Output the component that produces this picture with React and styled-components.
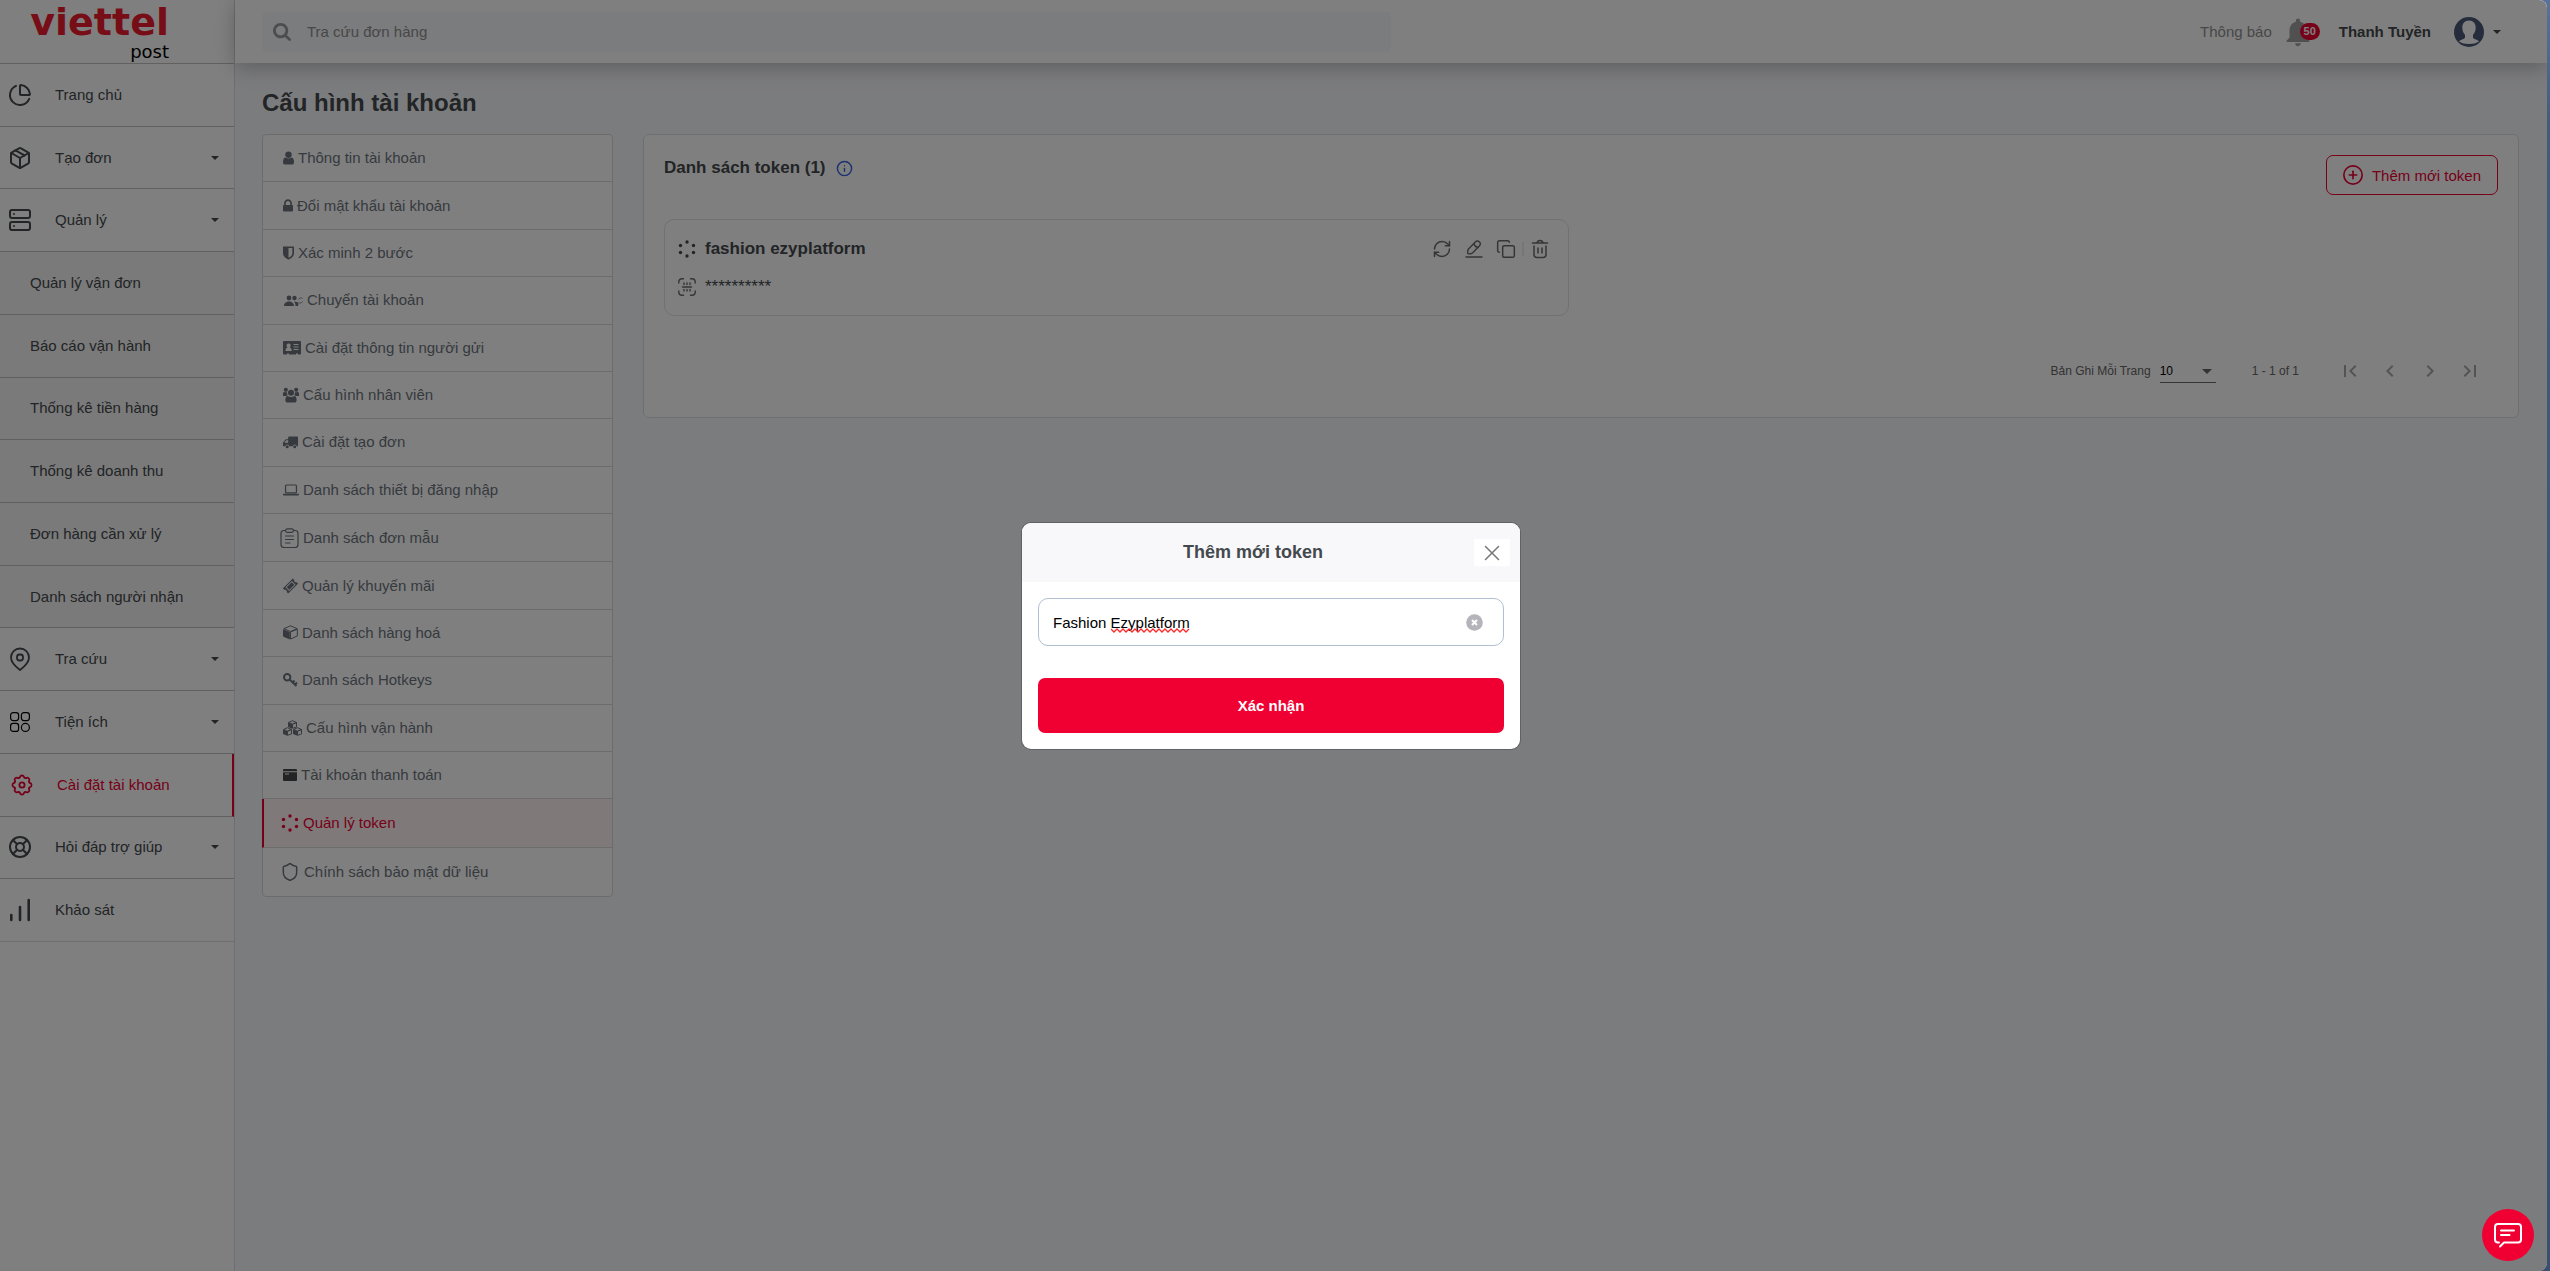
import React, { useState } from 'react';
import styled, { createGlobalStyle, css } from 'styled-components';
import {
  ChartPie,
  Package,
  Server,
  LifeBuoy,
  RefreshCw,
  Copy,
  Shield,
  CirclePlus,
  Info,
  X,
} from 'lucide-react';
import { MdFirstPage, MdChevronLeft, MdChevronRight, MdLastPage, MdNotifications } from 'react-icons/md';

const GlobalStyle = createGlobalStyle`
  * {
    box-sizing: border-box;
  }
  body {
    margin: 0;
    font-family: 'Liberation Sans', Arial, sans-serif;
    font-size: 15px;
    line-height: 22px;
    color: #44494d;
  }
  button, input, select {
    font-family: inherit;
    font-size: inherit;
  }
  svg {
    display: block;
    flex-shrink: 0;
  }
`;

const Frame = styled.div`
  display: grid;
  min-height: 100vh;
  padding-right: 3px;
  background: linear-gradient(#5a7299, #45597a 10%, #3a4e70);
`;

const Page = styled.div`
  position: relative;
  display: grid;
  grid-template-columns: 235px minmax(0, 1fr);
  border-radius: 0 8px 8px 0;
  overflow: hidden;
  background: #f7f8fc;
`;

/* sidebar */

const Sidebar = styled.aside`
  background: #ffffff;
  border-right: 1px solid #dcdcdc;
`;

const Logo = styled.a`
  display: flex;
  flex-direction: column;
  align-items: flex-end;
  height: 64px;
  padding-right: 65px;
  border-bottom: 1px solid #c0c0c0;
  font-family: 'DejaVu Sans', sans-serif;
  text-decoration: none;
`;

const LogoName = styled.span`
  font-size: 38px;
  font-weight: bold;
  line-height: 44px;
  color: #ee1c2e;
`;

const LogoSub = styled.span`
  font-size: 18px;
  line-height: 16px;
  color: #000000;
`;

const NavList = styled.nav`
  display: grid;
  grid-auto-rows: 1fr;
  min-height: 878px;
`;

const NavItem = styled.a`
  display: flex;
  align-items: center;
  gap: 23px;
  padding: 0 15px 0 8px;
  border-bottom: 1px solid #c0c0c0;
  color: #44494d;
  text-decoration: none;

  &:last-child {
    border-color: #dcdcdc;
  }

  ${(props) =>
    props.$sub &&
    css`
      padding-left: 30px;
      background: #f4f4f4;
    `}

  ${(props) =>
    props.$active &&
    css`
      padding-left: 10px;
      color: #ee0033;
      border-right: 2px solid #ee0033;
    `}
`;

const NavLabel = styled.span`
  flex: 1;
`;

const Caret = styled.span`
  border: 4px solid transparent;
  border-top-color: currentColor;
  border-bottom: 0;
`;

/* top bar */

const Content = styled.div`
  min-width: 0;
`;

const TopBar = styled.header`
  position: relative;
  display: flex;
  align-items: center;
  height: 63px;
  padding: 0 46px 0 27px;
  background: #ffffff;
  box-shadow: 0 4px 20px rgba(0, 0, 0, 0.25);
`;

const SearchBox = styled.label`
  display: flex;
  align-items: center;
  gap: 14px;
  width: calc(50% + 9px);
  height: 40px;
  padding: 0 11px;
  border-radius: 5px;
  background: #f7f8fc;
  color: #9a9a9a;
`;

const SearchInput = styled.input`
  flex: 1;
  border: 0;
  outline: 0;
  background: none;

  &::placeholder {
    color: #8f8f8f;
    opacity: 1;
  }
`;

const UserArea = styled.div`
  display: flex;
  align-items: center;
  margin-left: auto;
`;

const NoticeButton = styled.button`
  position: relative;
  display: flex;
  align-items: center;
  gap: 9px;
  padding: 0 5px 0 0;
  border: 0;
  background: none;
  color: #8f8f8f;
`;

const Badge = styled.span`
  position: absolute;
  right: 0;
  top: 8px;
  padding: 0 4px;
  border-radius: 9px;
  background: #ee0033;
  color: #ffffff;
  font-size: 11px;
  font-weight: bold;
  line-height: 17px;
`;

const UserButton = styled.button`
  display: flex;
  align-items: center;
  gap: 9px;
  margin-left: 19px;
  padding: 0;
  border: 0;
  background: none;
  color: #44494d;
  font-weight: bold;
`;

const UserName = styled.span`
  margin-right: 14px;
`;

/* main area */

const Main = styled.main`
  padding: 25px 28px 24px 27px;
`;

const Heading = styled.h1`
  margin: 0 0 16px;
  font-size: 24px;
  line-height: 30px;
`;

const Columns = styled.div`
  display: grid;
  grid-template-columns: 351px minmax(0, 1fr);
  gap: 30px;
  align-items: start;
`;

const ConfigMenu = styled.nav`
  display: flex;
  flex-direction: column;
  min-height: 763px;
  border: 1px solid #d9d9d9;
  border-radius: 4px;
  background: #ffffff;
`;

const ConfigItem = styled.a`
  display: flex;
  flex: 1 0 ${(props) => (props.$wide ? 48 : 47)}px;
  align-items: center;
  gap: 4px;
  padding-left: ${(props) => (props.$wide ? 17 : 20)}px;
  border-bottom: 1px solid #d9d9d9;
  color: #6c757d;
  text-decoration: none;

  &:last-child {
    border-bottom: 0;
  }

  ${(props) =>
    props.$active &&
    css`
      margin-left: -1px;
      border-left: 2px solid #ee0033;
      background: #fff3f5;
      color: #ee0033;
    `}
`;

const Panel = styled.section`
  padding: 20px 20px 26px;
  border: 1px solid #dcdfe3;
  border-radius: 6px;
  background: #ffffff;
`;

const PanelHeader = styled.div`
  display: flex;
  align-items: flex-start;
  justify-content: space-between;
  margin-bottom: 24px;
`;

const PanelTitle = styled.h2`
  display: flex;
  align-items: center;
  gap: 10px;
  margin: 0;
  font-size: 17px;
  line-height: 26px;

  svg {
    color: #2f62dd;
  }
`;

const AddButton = styled.button`
  display: flex;
  align-items: center;
  gap: 8px;
  height: 40px;
  padding: 0 16px 0 15px;
  border: 1px solid #ee0033;
  border-radius: 7px;
  background: #ffffff;
  color: #ee0033;
`;

const TokenGrid = styled.div`
  display: grid;
  grid-template-columns: 1fr 1fr;
  gap: 24px;
`;

const TokenCard = styled.article`
  display: flex;
  flex-direction: column;
  gap: 16px;
  padding: 18px 12px 17px 13px;
  border: 1px solid #dfe2ea;
  border-radius: 10px;
`;

const TokenRow = styled.div`
  display: flex;
  align-items: center;
  gap: 9px;
  font-size: 17px;
`;

const TokenName = styled.strong`
  flex: 1;
`;

const TokenActions = styled.div`
  display: flex;
  align-items: center;
`;

const IconButton = styled.button`
  display: flex;
  padding: 0 6px;
  border: 0;
  background: none;
  color: #6b6b6b;
`;

const Divider = styled.span`
  width: 2px;
  height: 14px;
  background: #ececf5;
`;

const Pagination = styled.div`
  display: flex;
  align-items: center;
  justify-content: flex-end;
  margin-top: 35px;
  padding-right: 8px;
  font-size: 12px;
  color: #666666;
`;

const PageSize = styled.label`
  position: relative;
  display: flex;
  align-items: center;
  gap: 9px;

  ${Caret} {
    position: absolute;
    right: 4px;
    border-width: 5px;
    border-bottom: 0;
    pointer-events: none;
  }
`;

const PageSizeSelect = styled.select`
  width: 56px;
  height: 24px;
  padding: 0;
  border: 0;
  border-bottom: 1px solid #6a6a6a;
  border-radius: 0;
  appearance: none;
  background: none;
  color: #000000;
`;

const PageRange = styled.span`
  margin: 0 31px 0 36px;
`;

const PageButton = styled.button`
  display: flex;
  align-items: center;
  justify-content: center;
  width: 40px;
  height: 40px;
  padding: 0;
  border: 0;
  background: none;
  color: #a8a8a8;
`;

/* modal */

const Backdrop = styled.div`
  position: absolute;
  inset: 0;
  display: flex;
  align-items: center;
  justify-content: center;
  padding: 1px 5px 0 0;
  background: rgba(0, 0, 0, 0.5);
`;

const Dialog = styled.form`
  width: 500px;
  border: 1px solid rgba(0, 0, 0, 0.2);
  border-radius: 10px;
  background: #ffffff;
  background-clip: padding-box;
  overflow: hidden;
`;

const DialogHeader = styled.div`
  display: flex;
  align-items: center;
  padding: 16px 10px;
  background: #f8f8fb;
`;

const DialogTitle = styled.h2`
  flex: 1;
  margin: 0;
  font-size: 18px;
  line-height: 27px;
  text-align: center;
`;

const CloseButton = styled.button`
  display: flex;
  align-items: center;
  justify-content: center;
  width: 36px;
  height: 27px;
  padding: 0;
  border: 0;
  background: #ffffff;
  color: #7a7a7a;
`;

const DialogBody = styled.div`
  display: flex;
  flex-direction: column;
  gap: 32px;
  padding: 16px;
`;

const Field = styled.div`
  position: relative;
  display: flex;
  align-items: center;
  height: 48px;
  padding: 0 20px 0 14px;
  border: 1px solid #b1bfd0;
  border-radius: 10px;
`;

const FieldInput = styled.input`
  flex: 1;
  padding: 0;
  border: 0;
  outline: 0;
  color: #000000;
`;

const Squiggle = styled.svg`
  position: absolute;
  left: 72px;
  top: 29px;
`;

const ClearButton = styled.button`
  padding: 0;
  border: 0;
  background: none;
`;

const SubmitButton = styled.button`
  height: 55px;
  border: 0;
  border-radius: 7px;
  background: #f00032;
  color: #ffffff;
  font-weight: bold;
`;

const ChatButton = styled.button`
  position: absolute;
  right: 13px;
  bottom: 10px;
  display: flex;
  align-items: center;
  justify-content: center;
  width: 52px;
  height: 52px;
  padding: 0;
  border: 0;
  border-radius: 50%;
  background: #f00032;
  color: #ffffff;
`;

/* icons */

const Glyph = ({ width, height = 16, box, children }) => (
  <svg width={width} height={height} viewBox={box || `0 0 ${width} ${height}`} fill="currentColor" aria-hidden="true">
    {children}
  </svg>
);

const Outline = ({ size = 24, children, ...rest }) => (
  <svg
    width={size}
    height={size}
    viewBox={`0 0 ${size} ${size}`}
    fill="none"
    stroke="currentColor"
    strokeLinecap="round"
    strokeLinejoin="round"
    aria-hidden="true"
    {...rest}
  >
    {children}
  </svg>
);

const UserIcon = () => (
  <Glyph width={11} height={14} box="256 128 1280 1536">
    <path d="M1536 1399q0 109-62.5 187t-150.5 78h-854q-88 0-150.5-78t-62.5-187q0-85 8.5-160.5t31.5-152 58.5-131 94-89 134.5-34.5q131 128 313 128t313-128q76 0 134.5 34.5t94 89 58.5 131 31.5 152 8.5 160.5zm-256-887q0 159-112.5 271.5t-271.5 112.5-271.5-112.5-112.5-271.5 112.5-271.5 271.5-112.5 271.5 112.5 112.5 271.5z" />
  </Glyph>
);

const LockIcon = () => (
  <Glyph width={10} height={14} box="320 128 1152 1536">
    <path d="M640 768h512v-192q0-106-75-181t-181-75-181 75-75 181v192zm832 96v576q0 40-28 68t-68 28h-960q-40 0-68-28t-28-68v-576q0-40 28-68t68-28h32v-192q0-184 132-316t316-132 316 132 132 316v192h32q40 0 68 28t28 68z" />
  </Glyph>
);

const HalfShieldIcon = () => (
  <Glyph width={11} height={14} box="256 128 1280 1536">
    <path d="M1344 960v-640h-448v1137q119-63 213-137 235-184 235-360zm192-768v768q0 86-33.5 170.5t-83 150-118 127.5-126.5 103-121 77.5-89.5 49.5-42.5 20q-12 6-26 6t-26-6q-16-7-42.5-20t-89.5-49.5-121-77.5-126.5-103-118-127.5-83-150-33.5-170.5v-768q0-26 19-45t45-19h1152q26 0 45 19t19 45z" />
  </Glyph>
);

const SearchIcon = () => (
  <Glyph width={18} height={18} box="64 128 1664 1664">
    <path d="M1216 832q0-185-131.5-316.5t-316.5-131.5-316.5 131.5-131.5 316.5 131.5 316.5 316.5 131.5 316.5-131.5 131.5-316.5zm512 832q0 52-38 90t-90 38q-54 0-90-38l-343-342q-179 124-399 124-143 0-273.5-55.5t-225-150-150-225-55.5-273.5 55.5-273.5 150-225 225-150 273.5-55.5 273.5 55.5 225 150 150 225 55.5 273.5q0 220-124 399l343 343q37 37 37 90z" />
  </Glyph>
);

const SwitchUserIcon = () => (
  <Glyph width={20} height={12}>
    <circle cx="6" cy="4" r="2.4" />
    <circle cx="11.5" cy="4" r="2.2" />
    <path d="M1 12c0-3 2.500-4.500 5-4.500s5 1.500 5 4.500zM11 7.500c3 0 4.500 1 4.500 2.500L15 12h-2.500c0-2-.5-3.500-1.500-4.500z" />
    <path d="M15.500 5.500a2.600 2.600 0 0 1 4-1M19.500 7.500a2.600 2.600 0 0 1-4 1" fill="none" stroke="currentColor" strokeWidth=".8" />
  </Glyph>
);

const IdCardIcon = () => (
  <Glyph width={18} height={14}>
    <path
      fillRule="evenodd"
      d="M1 0h16q1 0 1 1v11.500q0 1-1 1h-2v-1h-2v1H6v-1H4v1H1q-1 0-1-1V1q0-1 1-1zM5.500 2.500a2 2 0 0 0-2 2c0 1 .4 1.700 1 2.200C3 7 2.500 8 2.500 10h6.200c0-2-.5-3-2-3.300.6-.5 1-1.200 1-2.200a2 2 0 0 0-2.200-2zM10.500 3v1h5V3zM10.500 5.500v1h5v-1zM10.500 8v1h5V8z"
    />
  </Glyph>
);

const GroupIcon = () => (
  <Glyph width={16} height={16} box="0 0 17 16">
    <circle cx="3" cy="2.500" r="2.200" />
    <circle cx="14" cy="2.500" r="2.200" />
    <circle cx="8.500" cy="5.500" r="3.200" />
    <path d="M0 9V6.500C0 5 1 4.700 1.800 4.700 2.600 5.300 3.500 5.300 4.300 5c0 1.500.2 2.300 1 3.200C4 8.200 3.500 9 3 9zM17 9V6.500c0-1.500-1-1.800-1.800-1.800-.8.600-1.700.6-2.500.3 0 1.500-.2 2.300-1 3.200 1.300 0 1.800.8 2.300.8zM2.500 13.500C2.500 10.500 3.500 9 5 9c2 1.500 5 1.500 7 0 1.500 0 2.500 1.500 2.500 4.500 0 1.500-1 2.500-2.500 2.500H5c-1.500 0-2.500-1-2.500-2.500z" />
  </Glyph>
);

const TruckIcon = () => (
  <Glyph width={15} height={13} box="0 0 16 13">
    <path
      fillRule="evenodd"
      d="M6.500 0H15q1 0 1 1v9.500h-1.500a2 2 0 0 0-4 0h-4a2 2 0 0 0-4 0H0V6.500L3 3h2.500V1q0-1 1-1zM3.500 4.200 1.300 6.800h4.200V4.200z"
    />
    <circle cx="4.500" cy="11" r="1.600" />
    <circle cx="12.500" cy="11" r="1.600" />
  </Glyph>
);

const LaptopIcon = () => (
  <Glyph width={16} height={12} box="0 0 17 12">
    <rect x="2.700" y=".7" width="11.600" height="8.300" rx="1" fill="none" stroke="currentColor" strokeWidth="1.300" />
    <path d="M0 10h17v.8q0 1-1 1H1q-1 0-1-1z" />
  </Glyph>
);

const ClipboardIcon = () => (
  <Glyph width={19} height={20}>
    <g fill="none" stroke="currentColor" strokeWidth="1.200" strokeLinecap="round">
      <path d="M5.500 2.500H4Q1 2.500 1 5.500v11q0 3 3 3h11q3 0 3-3v-11q0-3-3-3h-1.500" />
      <rect x="5.500" y=".8" width="8" height="3.600" rx="1.800" />
      <path d="M5.500 8h8M5.500 11.500h8M5.500 15h4.500" />
    </g>
  </Glyph>
);

const TicketIcon = () => (
  <Glyph width={15} height={16} box="0 0 16 16">
    <g transform="rotate(-45 8 8)">
      <path
        fillRule="evenodd"
        d="M.5 4h15v2.300a1.800 1.800 0 0 0 0 3.400V12H.5V9.700a1.800 1.800 0 0 0 0-3.400zM3.200 5.200v5.600h9.600V5.200z"
      />
      <rect x="4.200" y="6" width="7.600" height="4" />
    </g>
  </Glyph>
);

const CubeIcon = () => (
  <Glyph width={15} height={15}>
    <path d="M0 4.200 6.800 7v7.600L.5 11.800Q0 11.500 0 11z" />
    <path d="M7.500 14V7l6.800-2.800V11zM7.500.8.800 3.700l6.700 2.800 6.700-2.800z" fill="none" stroke="currentColor" strokeLinejoin="round" />
  </Glyph>
);

const KeyIcon = () => (
  <Glyph width={15} height={14}>
    <circle cx="4.200" cy="4.200" r="3.200" fill="none" stroke="currentColor" strokeWidth="2" />
    <path d="m6.500 6.500 7 6.500M9.500 9.500 11.500 7.500M12 11.500l2-2" fill="none" stroke="currentColor" strokeWidth="2" />
  </Glyph>
);

const CubesIcon = () => (
  <Glyph width={19} height={16}>
    {['translate(5 0)', 'translate(0 7)', 'translate(10 7)'].map((place) => (
      <g key={place} transform={place}>
        <path d="M0 2.500 4.300 4.300v4.400L0 7z" />
        <path d="M4.500 8.300V4.200l4-1.700V7zM4.500.7l-4 1.800 4 1.700 4-1.700z" fill="none" stroke="currentColor" />
      </g>
    ))}
  </Glyph>
);

const WalletIcon = () => (
  <Glyph width={14} height={12}>
    <path
      fill="#44494d"
      fillRule="evenodd"
      d="M1 0h12q1 0 1 1v1.200H0V1q0-1 1-1zM0 3.200h14V11q0 1-1 1H1q-1 0-1-1zM2 4.500v1h4v-1z"
    />
  </Glyph>
);

const TokenIcon = () => (
  <Glyph width={18} height={18}>
    {[[9, 2], [15.5, 5.5], [15.5, 12.5], [9, 16], [2.5, 12.5], [2.5, 5.5]].map(([x, y]) => (
      <circle key={`${x}-${y}`} cx={x} cy={y} r="1.700" />
    ))}
  </Glyph>
);

const PrivacyIcon = () => <Shield size={20} strokeWidth={1.8} />;

const ScanIcon = () => (
  <Outline size={18} stroke="#6b6b6b" strokeWidth="1.400">
    <path d="M.8 5V4Q.8.8 4 .8h1.500M12.500.8H14q3.200 0 3.200 3.200v1M17.200 13v1q0 3.200-3.200 3.200h-1.500M5.500 17.200H4Q.8 17.200.8 14v-1" />
    <path d="M4.500 9h9M6 5v1.500M9 5v1.500M12 5v1.500M6 11.500V13M9 11.500V13M12 11.500V13" />
  </Outline>
);

const PenIcon = () => (
  <Outline size={20} strokeWidth="1.400">
    <path d="m4.500 10 6.800-7q2-2 4-.2t.2 4L9 13.500q-1 1-2.500 1.200l-1.500.2q-1.500 0-1.300-1.500l.1-1.500q.1-1.200.7-1.900zM10 4.500q.7 3.500 4.300 4M2 18h16" />
  </Outline>
);

const TrashIcon = () => (
  <Outline size={20} strokeWidth="1.500">
    <path d="M2.500 4h15M7 4q.5-2.500 3-2.500T13 4M4 7v8.500Q4 18.500 7 18.500h6q3 0 3-3V7M8 9v5M12 9v5" />
  </Outline>
);

const PinIcon = () => (
  <Outline strokeWidth="1.800">
    <path d="M12 23C8 20 3 15.500 3 10.500a9 9 0 0 1 18 0C21 15.500 16 20 12 23z" />
    <rect x="9" y="7.500" width="6" height="6" rx="2.500" />
  </Outline>
);

const AppsIcon = () => (
  <Outline stroke="#000000" strokeWidth="1.200">
    <rect x="2.600" y="2.600" width="8" height="8" rx="2.500" />
    <rect x="13.400" y="2.600" width="8" height="8" rx="2.500" />
    <rect x="2.600" y="13.400" width="8" height="8" rx="2.500" />
    <circle cx="17.400" cy="17.400" r="4" />
  </Outline>
);

// eight rounded teeth around the hub
const GearIcon = () => (
  <Outline strokeWidth="1.800">
    {[0, 45, 90, 135, 180, 225, 270, 315].map((angle) => (
      <path key={angle} transform={`rotate(${angle} 12 12)`} d="M9 4.800q1 0 1.200-1.300.3-1 1.800-1t1.800 1Q14 4.800 15 4.800" />
    ))}
    <circle cx="12" cy="12" r="2.600" />
  </Outline>
);

const BarsIcon = () => (
  <Outline strokeWidth="2.600">
    <path d="M3.300 17v5M12 9v13M20.700 2v20" />
  </Outline>
);

const AvatarIcon = () => (
  <svg width="30" height="30" viewBox="0 0 30 30" aria-hidden="true">
    <circle cx="15" cy="15" r="15" fill="#4b5a78" />
    <path
      d="M15 3.500c-4.300 0-6.700 3-6.700 7.300 0 3 1.200 5.500 2.700 7v2.700c0 1.500-4.500 2-6 4 2.500 1.700 6 2.500 10 2.500s7.500-.8 10-2.500c-1.500-2-6-2.500-6-4v-2.700c1.500-1.500 2.700-4 2.700-7 0-4.300-2.400-7.300-6.700-7.300z"
      fill="#ffffff"
    />
  </svg>
);

const ClearIcon = () => (
  <svg width="17" height="17" viewBox="0 0 17 17" aria-hidden="true">
    <circle cx="8.500" cy="8.500" r="8.300" fill="#b4b4ba" />
    <path d="m6 6 5 5M11 6l-5 5" stroke="#ffffff" strokeWidth="2" />
  </svg>
);

const ChatIcon = () => (
  <svg width="28" height="26" viewBox="0 0 28 26" fill="none" stroke="currentColor" strokeWidth="2" strokeLinecap="round" strokeLinejoin="round" aria-hidden="true">
    <path d="M5 20.500H4Q1 20.500 1 17.500V5Q1 2 4 2h20q3 0 3 3v12.500q0 3-3 3H10L6 24.500M7 8.500h13M7 13h8.500" />
  </svg>
);

const NAV = [
  { label: 'Trang chủ', icon: ChartPie },
  { label: 'Tạo đơn', icon: Package, caret: true },
  { label: 'Quản lý', icon: Server, caret: true },
  { label: 'Quản lý vận đơn', sub: true },
  { label: 'Báo cáo vận hành', sub: true },
  { label: 'Thống kê tiền hàng', sub: true },
  { label: 'Thống kê doanh thu', sub: true },
  { label: 'Đơn hàng cần xử lý', sub: true },
  { label: 'Danh sách người nhận', sub: true },
  { label: 'Tra cứu', icon: PinIcon, caret: true },
  { label: 'Tiện ích', icon: AppsIcon, caret: true },
  { label: 'Cài đặt tài khoản', icon: GearIcon, active: true },
  { label: 'Hỏi đáp trợ giúp', icon: LifeBuoy, caret: true },
  { label: 'Khảo sát', icon: BarsIcon },
];

const CONFIG = [
  { label: 'Thông tin tài khoản', icon: UserIcon },
  { label: 'Đổi mật khẩu tài khoản', icon: LockIcon },
  { label: 'Xác minh 2 bước', icon: HalfShieldIcon },
  { label: 'Chuyển tài khoản', icon: SwitchUserIcon },
  { label: 'Cài đặt thông tin người gửi', icon: IdCardIcon },
  { label: 'Cấu hình nhân viên', icon: GroupIcon },
  { label: 'Cài đặt tạo đơn', icon: TruckIcon },
  { label: 'Danh sách thiết bị đăng nhập', icon: LaptopIcon },
  { label: 'Danh sách đơn mẫu', icon: ClipboardIcon, wide: true },
  { label: 'Quản lý khuyến mãi', icon: TicketIcon },
  { label: 'Danh sách hàng hoá', icon: CubeIcon },
  { label: 'Danh sách Hotkeys', icon: KeyIcon },
  { label: 'Cấu hình vận hành', icon: CubesIcon },
  { label: 'Tài khoản thanh toán', icon: WalletIcon },
  { label: 'Quản lý token', icon: TokenIcon, wide: true, active: true },
  { label: 'Chính sách bảo mật dữ liệu', icon: PrivacyIcon, wide: true },
];

function SideNav() {
  return (
    <Sidebar>
      <Logo href="#">
        <LogoName>viettel</LogoName>
        <LogoSub>post</LogoSub>
      </Logo>
      <NavList>
        {NAV.map(({ label, icon: Icon, caret, sub, active }) => (
          <NavItem key={label} href="#" $sub={sub} $active={active}>
            {Icon && <Icon />}
            <NavLabel>{label}</NavLabel>
            {caret && <Caret />}
          </NavItem>
        ))}
      </NavList>
    </Sidebar>
  );
}

function Header() {
  return (
    <TopBar>
      <SearchBox>
        <SearchIcon />
        <SearchInput type="text" placeholder="Tra cứu đơn hàng" aria-label="Tra cứu đơn hàng" />
      </SearchBox>
      <UserArea>
        <NoticeButton type="button">
          Thông báo
          <MdNotifications size={34} color="#a0a0a0" />
          <Badge>50</Badge>
        </NoticeButton>
        <UserButton type="button">
          <UserName>Thanh Tuyền</UserName>
          <AvatarIcon />
          <Caret />
        </UserButton>
      </UserArea>
    </TopBar>
  );
}

function TokenPanel() {
  return (
    <Panel>
      <PanelHeader>
        <PanelTitle>
          Danh sách token (1)
          <Info size={17} strokeWidth={2} />
        </PanelTitle>
        <AddButton type="button">
          <CirclePlus size={22} strokeWidth={1.8} />
          Thêm mới token
        </AddButton>
      </PanelHeader>
      <TokenGrid>
        <TokenCard>
          <TokenRow>
            <TokenIcon />
            <TokenName>fashion ezyplatform</TokenName>
            <TokenActions>
              <IconButton type="button" aria-label="Làm mới">
                <RefreshCw size={20} strokeWidth={1.8} />
              </IconButton>
              <IconButton type="button" aria-label="Sửa">
                <PenIcon />
              </IconButton>
              <IconButton type="button" aria-label="Sao chép">
                <Copy size={20} strokeWidth={1.8} />
              </IconButton>
              <Divider />
              <IconButton type="button" aria-label="Xóa">
                <TrashIcon />
              </IconButton>
            </TokenActions>
          </TokenRow>
          <TokenRow>
            <ScanIcon />
            **********
          </TokenRow>
        </TokenCard>
      </TokenGrid>
      <Pagination>
        <PageSize>
          Bản Ghi Mỗi Trang
          <PageSizeSelect defaultValue="10">
            <option>10</option>
            <option>20</option>
            <option>50</option>
          </PageSizeSelect>
          <Caret />
        </PageSize>
        <PageRange>1 - 1 of 1</PageRange>
        <PageButton type="button" aria-label="Trang đầu">
          <MdFirstPage size={24} />
        </PageButton>
        <PageButton type="button" aria-label="Trang trước">
          <MdChevronLeft size={24} />
        </PageButton>
        <PageButton type="button" aria-label="Trang sau">
          <MdChevronRight size={24} />
        </PageButton>
        <PageButton type="button" aria-label="Trang cuối">
          <MdLastPage size={24} />
        </PageButton>
      </Pagination>
    </Panel>
  );
}

function TokenDialog() {
  const [name, setName] = useState('Fashion Ezyplatform');

  return (
    <Backdrop>
      <Dialog role="dialog" aria-labelledby="dialog-title" onSubmit={(e) => e.preventDefault()}>
        <DialogHeader>
          <DialogTitle id="dialog-title">Thêm mới token</DialogTitle>
          <CloseButton type="button" aria-label="Đóng">
            <X size={26} strokeWidth={1.5} />
          </CloseButton>
        </DialogHeader>
        <DialogBody>
          <Field>
            <FieldInput
              type="text"
              aria-label="Tên token"
              spellCheck={false}
              value={name}
              onChange={(e) => setName(e.target.value)}
            />
            {name === 'Fashion Ezyplatform' && (
              <Squiggle width="79" height="5" viewBox="0 0 79 5" aria-hidden="true">
                <path d={`M0 1${'l3 3 3-3'.repeat(13)}`} fill="none" stroke="#ff2a2a" strokeWidth="1.300" />
              </Squiggle>
            )}
            <ClearButton type="button" aria-label="Xóa nội dung" onClick={() => setName('')}>
              <ClearIcon />
            </ClearButton>
          </Field>
          <SubmitButton type="submit">Xác nhận</SubmitButton>
        </DialogBody>
      </Dialog>
    </Backdrop>
  );
}

function App() {
  return (
    <Frame>
      <GlobalStyle />
      <Page>
        <SideNav />
        <Content>
          <Header />
          <Main>
            <Heading>Cấu hình tài khoản</Heading>
            <Columns>
              <ConfigMenu>
                {CONFIG.map(({ label, icon: Icon, wide, active }) => (
                  <ConfigItem key={label} href="#" $wide={wide} $active={active}>
                    <Icon />
                    {label}
                  </ConfigItem>
                ))}
              </ConfigMenu>
              <TokenPanel />
            </Columns>
          </Main>
        </Content>
        <TokenDialog />
        <ChatButton type="button" aria-label="Chat">
          <ChatIcon />
        </ChatButton>
      </Page>
    </Frame>
  );
}

export default App;
